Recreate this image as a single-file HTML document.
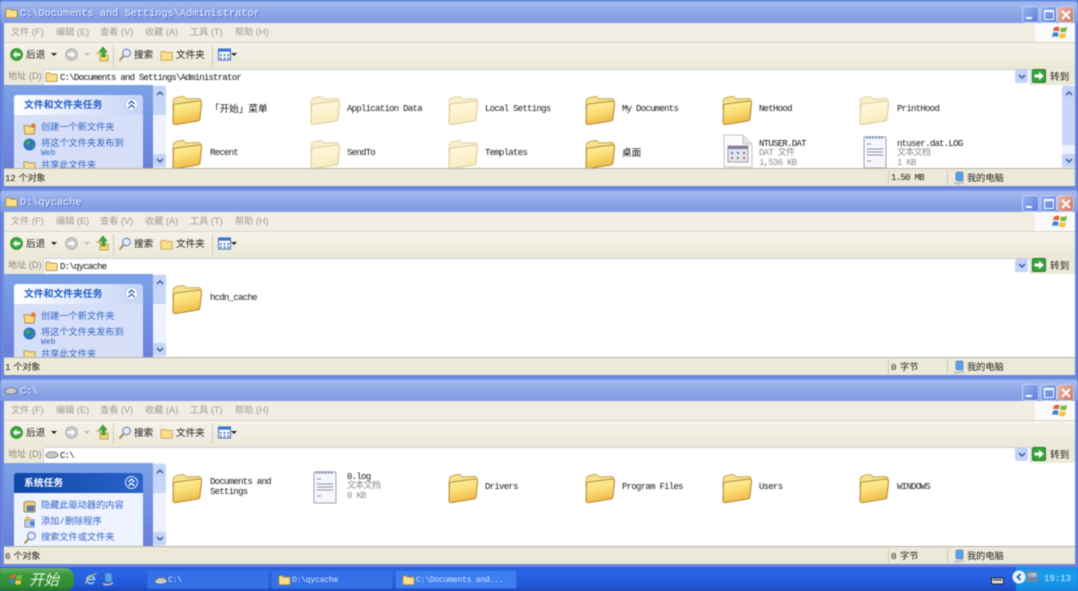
<!DOCTYPE html>
<html lang="zh"><head><meta charset="utf-8"><title>Windows XP</title>
<style>
html,body{margin:0;padding:0;width:1078px;height:591px;overflow:hidden;background:#2a5fd8}
body{font-family:"Liberation Mono","WenQuanYi Zen Hei","Noto Sans CJK SC",monospace;filter:blur(.5px)}
div,span,svg{position:absolute;white-space:nowrap}
.w{left:0;width:1078px;height:189px;background:#6b86dc;overflow:hidden}
.tb{left:0;top:0;width:1078px;height:23px;border-radius:6px 6px 0 0;background:linear-gradient(#5f85dc,#a4b9ee 12%,#93abe9 45%,#86a1e6 75%,#7f9be3)}
.tt{left:20px;top:7px;font-size:10.25px;line-height:14px;color:#f4f7fd;text-shadow:1px 1px 0 #4a66c0}
.btn{top:6px;width:15px;height:15px;border:1px solid #c4d2f4;border-radius:3px;background:linear-gradient(135deg,#9ab3ee,#5a7edc)}
.btn.x{background:linear-gradient(135deg,#e8b8ae,#cc7460)}
.bar{left:4px;width:1071px;background:#ece9d8}
.m{top:23px;height:19px;border-bottom:1px solid #d8d4c2;background:#f0eee2}
.mi{top:26px;font-family:"Liberation Sans","WenQuanYi Zen Hei","Noto Sans CJK SC",sans-serif;font-size:9.2px;line-height:13px;color:#a09e92}
.logo{left:1035px;top:23px;width:40px;height:19px;background:#fafafa}
.tool{top:43px;height:25px;background:linear-gradient(#f5f3ea,#ebe8d8)}
.tx{font-size:9.6px;line-height:13px;color:#1c1c1c;margin-top:1px}
.ar{width:0;height:0;border-left:3px solid transparent;border-right:3px solid transparent;border-top:3px solid #222;top:53px}
.sep{width:1px;background:#cfcbb8;top:45px;height:21px}
.ad{top:68px;height:17px;background:#ece9d8}
.al{left:8px;top:70px;font-family:"Liberation Sans","WenQuanYi Zen Hei","Noto Sans CJK SC",sans-serif;font-size:9.2px;line-height:13px;color:#8d8b80}
.ab{left:43px;top:69px;width:986px;height:15px;background:#fff;border:1px solid #c8cfdc}
.at{left:60px;top:72px;font-size:9px;line-height:13px;letter-spacing:-.76px;color:#111}
.side{left:4px;top:85px;width:149px;height:83px;background:linear-gradient(#7ba2e7,#6a80da);overflow:hidden}
.hd{left:10px;top:10px;width:129px;height:20px;border-radius:3px 3px 0 0;background:linear-gradient(90deg,#fff,#c6d3f7)}
.hd b{position:absolute;left:10px;top:4px;font-size:9.8px;line-height:13px;color:#215dc6;font-weight:bold}
.hd i{position:absolute;right:5px;top:3px;width:13px;height:13px;border-radius:50%;background:#fff;border:1px solid #b8c6ea;box-sizing:border-box}
.hd svg{right:7px;top:5px}
.bd{left:10px;top:30px;width:129px;height:60px;background:#d6dff7}
.lk{left:37px;font-size:9.2px;line-height:12px;color:#2f63c8;margin-top:1px}
.cont{left:153px;top:85px;width:922px;height:83px;background:#fff;overflow:hidden}
.sb{top:85px;width:13px;height:83px;background:#edf2fe}
.sbb{left:0;width:13px;height:13px;background:#c4d3f8;border-radius:2px}
.sbb svg{left:3px;top:4px}
.th{left:0;top:14px;width:13px;background:#c8d6fa}
.n{font-size:9px;line-height:11px;letter-spacing:-.72px;color:#1a1a1a;margin-top:1px}
.g{color:#8b8b8b}
.st{top:168px;height:18px;background:#ece9d8;border-top:1px solid #b5b2a4;box-sizing:border-box}
.stx{font-size:9.2px;line-height:13px;top:172px;color:#222}
.sd{width:1px;top:170px;height:15px;background:#cfcbb8}
.task{left:0;top:567px;width:1078px;height:24px;background:linear-gradient(#2a5ed8,#2a66e8 15%,#2358d8 75%,#1c46b8)}
.start{left:0;top:1px;width:74px;height:23px;border-radius:0 9px 9px 0;background:linear-gradient(#68b068,#389838 30%,#2f8c2f 80%,#246f24)}
.start span{left:29px;top:3px;font:italic 15px/17px "WenQuanYi Zen Hei","Noto Sans CJK SC",sans-serif;color:#e8f2e8}
.tk{top:3px;width:122px;height:19px;border-radius:2px;background:#3470e6;box-sizing:border-box;border:1px solid #2f68dc}
.tk span{left:20px;top:4px;font-size:8px;line-height:11px;letter-spacing:-.2px;color:#d8e4fa}
.tray{left:1016px;top:0;width:62px;height:24px;background:linear-gradient(#1c8ce8,#18a0ee 30%,#1488e0)}
</style></head><body>
<svg width="0" height="0" style="left:0;top:0"><defs>
<linearGradient id="fg" x1="0" y1="0" x2=".3" y2="1"><stop offset="0" stop-color="#fdf3a8"/><stop offset=".5" stop-color="#fbe07a"/><stop offset="1" stop-color="#efbc48"/></linearGradient>
<linearGradient id="pg" x1="0" y1="0" x2=".3" y2="1"><stop offset="0" stop-color="#fffbe4"/><stop offset="1" stop-color="#f9ebbc"/></linearGradient>
<symbol id="fo" viewBox="0 0 30 30"><path d="M1 8Q1 3 5 2.500L10 1.500Q13 1.500 14 4L26 3.500Q29 3.500 29 6V10L1 14Z" fill="#f6e28e" stroke="#c8a84e" stroke-width=".9"/><path d="M1.500 11Q2 9 4 9L27 6Q30 6 29.500 9L28 23Q28 25.500 25.500 26L4 29.500Q1 30 1 27Z" fill="url(#fg)" stroke="#b6893a" stroke-width="1.100"/></symbol>
<symbol id="fp" viewBox="0 0 30 30"><path d="M1 8Q1 3 5 2.500L10 1.500Q13 1.500 14 4L26 3.500Q29 3.500 29 6V10L1 14Z" fill="#f9efca" stroke="#e0d2a4" stroke-width=".9"/><path d="M1.500 11Q2 9 4 9L27 6Q30 6 29.500 9L28 23Q28 25.500 25.500 26L4 29.500Q1 30 1 27Z" fill="url(#pg)" stroke="#dccb9a" stroke-width="1.100"/></symbol>
<symbol id="sf" viewBox="0 0 16 14"><path d="M1 3H6L7 4H14V13H1Z" fill="#fbe08a" stroke="#c9a24c"/></symbol>
<symbol id="dr" viewBox="0 0 16 14"><path d="M1 7L5 4H12L15 7V9L10 11H4L1 9Z" fill="#c8c8c8" stroke="#555" stroke-width=".7"/></symbol>
<symbol id="back" viewBox="0 0 14 14"><circle cx="7" cy="7" r="6.300" fill="#3da83d" stroke="#2a8a2a"/><path d="M3 7L7 3.400V5.600H11V8.400H7V10.600Z" fill="#fff"/></symbol>
<symbol id="fwd" viewBox="0 0 14 14"><circle cx="7" cy="7" r="6.300" fill="#c8c8c8" stroke="#b0b0b0"/><path d="M11 7L7 3.400V5.600H3V8.400H7V10.600Z" fill="#fff"/></symbol>
<symbol id="up" viewBox="0 0 14 16"><path d="M1 7H5V15H13V9H5" fill="#f6d873" stroke="#c8a448"/><path d="M8 1L12 6H10V11H7V6H4Z" fill="#3da83d" stroke="#2a8a2a" stroke-width=".6"/></symbol>
<symbol id="se" viewBox="0 0 14 14"><circle cx="8.500" cy="5" r="3.800" fill="#e4eefc" stroke="#7a94c0" stroke-width="1.300"/><path d="M5.600 7.800L1.500 12.500" stroke="#b08a4c" stroke-width="2"/></symbol>
<symbol id="vw" viewBox="0 0 14 13"><rect x=".5" y=".5" width="13" height="12" fill="#fff" stroke="#3a64b8"/><rect x=".5" y=".5" width="13" height="3" fill="#3a78d8"/><path d="M2 6h2v2H2zM6 6h2v2H6zM10 6h2v2h-2zM2 9.500h2v2H2zM6 9.500h2v2H6zM10 9.500h2v2h-2z" fill="#4a78c8"/></symbol>
<symbol id="go" viewBox="0 0 14 14"><rect x=".5" y=".5" width="13" height="13" rx="1.500" fill="#35a53a" stroke="#1f7a26"/><path d="M2.500 5.500H7V2.800L11.800 7 7 11.200V8.500H2.500Z" fill="#fff"/></symbol>
<symbol id="txt" viewBox="0 0 24 34"><rect x="1" y="2" width="22" height="31" rx="1" fill="#f6f6fb" stroke="#9aa1b4"/><path d="M3 2.500h18" stroke="#7b89a8" stroke-width="2.500" stroke-dasharray="1.500 1.500"/><path d="M4 9h4M4 14h16M4 17h16M4 20h16M4 26h4" stroke="#8a93a5"/></symbol>
<symbol id="dat" viewBox="0 0 30 34"><path d="M1 1H20L29 10V33H1Z" fill="#fafafa" stroke="#c4c4c4"/><path d="M20 1V10H29" fill="#e8e8e8" stroke="#c4c4c4"/><rect x="5" y="12" width="20" height="16" fill="#e4e4ea" stroke="#a0a0b0"/><rect x="5" y="12" width="20" height="3" fill="#7e7ea0"/><path d="M8 18h2v2H8zM14 18h2v2h-2zM20 18h2v2h-2z" fill="#5b72b0"/><path d="M8 23h2v2H8zM20 23h2v2h-2z" fill="#c86060"/><path d="M14 23h2v2h-2z" fill="#5a9c5a"/></symbol>
<symbol id="pc" viewBox="0 0 12 14"><rect x="3" y="1" width="7" height="9" rx="1.500" fill="#5aa0e8" stroke="#3a70b0" stroke-width=".6"/><path d="M1 11Q6 13 11 10V12Q6 14.500 1 13Z" fill="#b9bcc8"/></symbol>
<symbol id="xp" viewBox="0 0 18 18"><path d="M2 4Q5 2 8 3.500L7 8Q4 6.500 1 8Z" fill="#e2603a"/><path d="M9.500 3.500Q12.500 5 16 3L15 8Q11.500 9.500 8.500 8Z" fill="#78b83c"/><path d="M1 9.500Q4 8 6.800 9.500L6 14Q3 12.500 0 14Z" fill="#3f7fd6"/><path d="M8.200 9.500Q11.500 11 14.800 9.500L14 14.500Q10.500 16 7.200 14Z" fill="#f4c542"/></symbol>
<symbol id="fold2" viewBox="0 0 14 12"><path d="M1 3Q1 1.500 2.500 1.500H5L6 3H12Q13 3 13 4V10Q13 11 12 11H2Q1 11 1 10Z" fill="#fbe08a" stroke="#a88a3c" stroke-width=".9"/></symbol>
<symbol id="globe" viewBox="0 0 14 14"><circle cx="7" cy="7" r="6.500" fill="#2f74c8"/><path d="M3 3Q7 2 8 5L6 8L3 7ZM9 8L12 7L10 12Z" fill="#3cae48"/></symbol>
<symbol id="sh" viewBox="0 0 14 14"><path d="M1 3H5L6 4H13V12H1Z" fill="#f6dc94" stroke="#a08838" stroke-width=".8"/></symbol>
<symbol id="cr" viewBox="0 0 14 14"><path d="M1 4H6L7 5H13L12 13H2Z" fill="#f9da80" stroke="#9a7a30" stroke-width=".8"/><circle cx="11" cy="4" r="2.500" fill="#e8763a"/></symbol>
<symbol id="hide" viewBox="0 0 14 14"><path d="M1 4Q1 1.500 4 1.500H10Q13 1.500 13 4V12Q13 13 12 13H2Q1 13 1 12Z" fill="#e9cf7a" stroke="#8a7538" stroke-width=".8"/><rect x="4" y="6" width="8" height="6" fill="#5d78b0"/></symbol>
<symbol id="add" viewBox="0 0 14 14"><rect x="2" y="5" width="10" height="8" fill="#c9c9e0" stroke="#666a90" stroke-width=".7"/><circle cx="5" cy="4" r="2.500" fill="#e8c040"/><circle cx="10" cy="9" r="2.500" fill="#3f8ad8"/></symbol>
<symbol id="chev" viewBox="0 0 9 9"><path d="M1.500 4L4.500 1L7.500 4M1.500 8L4.500 5L7.500 8" fill="none" stroke="#2a5ab8" stroke-width="1.300"/></symbol>
<symbol id="chevw" viewBox="0 0 9 9"><path d="M1.500 4L4.500 1L7.500 4M1.500 8L4.500 5L7.500 8" fill="none" stroke="#fff" stroke-width="1.300"/></symbol>
<symbol id="aup" viewBox="0 0 8 6"><path d="M1 5L4 2L7 5" fill="none" stroke="#3a5a9a" stroke-width="1.500"/></symbol>
<symbol id="adn" viewBox="0 0 8 6"><path d="M1 1L4 4L7 1" fill="none" stroke="#3a5a9a" stroke-width="1.500"/></symbol>
</defs></svg>

<!-- WINDOW 1 -->
<div class="w" style="top:0">
<div class="tb"></div>
<svg style="left:5px;top:7px" width="13" height="12"><use href="#fold2"/></svg>
<div class="tt">C:\Documents and Settings\Administrator</div>
<div class="btn" style="left:1022px"><div style="left:3px;top:10px;width:6px;height:2px;background:#fff"></div></div>
<div class="btn" style="left:1040px"><div style="left:3px;top:3px;width:8px;height:7px;border:1px solid #fff;border-top-width:2px"></div></div>
<div class="btn x" style="left:1057px"><svg style="left:3px;top:3px" width="10" height="10"><path d="M1 1L9 9M9 1L1 9" stroke="#fff" stroke-width="2"/></svg></div>
<div class="bar m"></div>
<span class="mi" style="left:11px">文件 (F)</span><span class="mi" style="left:56px">编辑 (E)</span><span class="mi" style="left:100px">查看 (V)</span><span class="mi" style="left:145px">收藏 (A)</span><span class="mi" style="left:190px">工具 (T)</span><span class="mi" style="left:235px">帮助 (H)</span>
<div class="logo"></div><svg style="left:1052px;top:24px" width="17" height="17"><use href="#xp"/></svg>
<div class="bar tool"></div>
<svg style="left:10px;top:48px" width="13" height="13"><use href="#back"/></svg><span class="tx" style="left:26px;top:48px">后退</span><div class="ar" style="left:51px"></div>
<svg style="left:65px;top:48px" width="13" height="13"><use href="#fwd"/></svg><div class="ar" style="left:84px;border-top-color:#bbb"></div>
<svg style="left:95px;top:46px" width="14" height="16"><use href="#up"/></svg>
<div class="sep" style="left:113px"></div>
<svg style="left:118px;top:48px" width="14" height="14"><use href="#se"/></svg><span class="tx" style="left:134px;top:48px">搜索</span>
<svg style="left:160px;top:49px" width="14" height="12"><use href="#sf"/></svg><span class="tx" style="left:176px;top:48px">文件夹</span>
<div class="sep" style="left:212px"></div>
<svg style="left:218px;top:48px" width="13" height="13"><use href="#vw"/></svg><div class="ar" style="left:231px"></div>
<div class="bar ad"></div><span class="al">地址 (D)</span><div class="ab"></div>
<svg style="left:45px;top:71px" width="13" height="12"><use href="#fold2"/></svg>
<span class="at">C:\Documents and Settings\Administrator</span>
<div style="left:1015px;top:70px;width:13px;height:13px;background:#c4d3f8;border-radius:2px"><svg style="left:3px;top:4px" width="8" height="6"><use href="#adn"/></svg></div>
<svg style="left:1032px;top:69px" width="14" height="14"><use href="#go"/></svg><span class="tx" style="left:1050px;top:70px">转到</span>
<div class="side"><div class="hd"><b>文件和文件夹任务</b><i></i><svg width="9" height="9"><use href="#chev"/></svg></div><div class="bd"></div>
<svg style="left:19px;top:37px" width="13" height="13"><use href="#cr"/></svg><span class="lk" style="top:36px">创建一个新文件夹</span>
<svg style="left:19px;top:53px" width="13" height="13"><use href="#globe"/></svg><span class="lk" style="top:52px">将这个文件夹发布到</span><span class="lk" style="top:62px;font-size:8px">Web</span>
<svg style="left:19px;top:74px" width="13" height="13"><use href="#sh"/></svg><span class="lk" style="top:74px">共享此文件夹</span></div>
<div class="cont"></div>
<div class="sb" style="left:153px"><div class="sbb" style="top:1px"><svg width="8" height="6"><use href="#aup"/></svg></div><div class="th" style="height:16px"></div><div class="sbb" style="top:69px"><svg width="8" height="6"><use href="#adn"/></svg></div></div>
<div class="sb" style="left:1062px"><div class="sbb" style="top:1px"><svg width="8" height="6"><use href="#aup"/></svg></div><div class="th" style="height:46px"></div><div class="sbb" style="top:69px"><svg width="8" height="6"><use href="#adn"/></svg></div></div>
<svg style="left:172px;top:95px" width="30" height="30"><use href="#fo"/></svg><span class="tx" style="left:210px;top:102px;color:#111">「开始」菜单</span>
<svg style="left:310px;top:95px" width="30" height="30"><use href="#fp"/></svg><span class="n" style="left:347px;top:103px">Application Data</span>
<svg style="left:448px;top:95px" width="30" height="30"><use href="#fp"/></svg><span class="n" style="left:485px;top:103px">Local Settings</span>
<svg style="left:585px;top:95px" width="30" height="30"><use href="#fo"/></svg><span class="n" style="left:622px;top:103px">My Documents</span>
<svg style="left:722px;top:95px" width="30" height="30"><use href="#fo"/></svg><span class="n" style="left:759px;top:103px">NetHood</span>
<svg style="left:859px;top:95px" width="30" height="30"><use href="#fp"/></svg><span class="n" style="left:897px;top:103px">PrintHood</span>
<div style="left:166px;top:130px;width:896px;height:38px;overflow:hidden">
<svg style="left:6px;top:9px" width="30" height="30"><use href="#fo"/></svg><span class="n" style="left:44px;top:17px">Recent</span>
<svg style="left:144px;top:9px" width="30" height="30"><use href="#fp"/></svg><span class="n" style="left:181px;top:17px">SendTo</span>
<svg style="left:282px;top:9px" width="30" height="30"><use href="#fp"/></svg><span class="n" style="left:319px;top:17px">Templates</span>
<svg style="left:419px;top:9px" width="30" height="30"><use href="#fo"/></svg><span class="tx" style="left:456px;top:16px;color:#111">桌面</span>
<svg style="left:557px;top:4px" width="30" height="34"><use href="#dat"/></svg><span class="n" style="left:593px;top:8px">NTUSER.DAT</span><span class="n g" style="left:593px;top:17px">DAT 文件</span><span class="n g" style="left:593px;top:27px">1,536 KB</span>
<svg style="left:697px;top:5px" width="24" height="34"><use href="#txt"/></svg><span class="n" style="left:731px;top:8px">ntuser.dat.LOG</span><span class="n g" style="left:731px;top:17px">文本文档</span><span class="n g" style="left:731px;top:27px">1 KB</span>
</div>
<div class="bar st"></div><span class="stx" style="left:5px;word-spacing:-2px;letter-spacing:-.3px">12 个对象</span><div class="sd" style="left:888px"></div><div class="sd" style="left:947px"></div>
<span class="stx" style="left:891px;font-size:9px;letter-spacing:-.7px">1.50 MB</span><svg style="left:953px;top:171px" width="12" height="14"><use href="#pc"/></svg><span class="stx" style="left:967px">我的电脑</span>
</div>

<!-- WINDOW 2 -->
<div class="w" style="top:189px">
<div class="tb"></div>
<svg style="left:5px;top:7px" width="13" height="12"><use href="#fold2"/></svg>
<div class="tt">D:\qycache</div>
<div class="btn" style="left:1022px"><div style="left:3px;top:10px;width:6px;height:2px;background:#fff"></div></div>
<div class="btn" style="left:1040px"><div style="left:3px;top:3px;width:8px;height:7px;border:1px solid #fff;border-top-width:2px"></div></div>
<div class="btn x" style="left:1057px"><svg style="left:3px;top:3px" width="10" height="10"><path d="M1 1L9 9M9 1L1 9" stroke="#fff" stroke-width="2"/></svg></div>
<div class="bar m"></div>
<span class="mi" style="left:11px">文件 (F)</span><span class="mi" style="left:56px">编辑 (E)</span><span class="mi" style="left:100px">查看 (V)</span><span class="mi" style="left:145px">收藏 (A)</span><span class="mi" style="left:190px">工具 (T)</span><span class="mi" style="left:235px">帮助 (H)</span>
<div class="logo"></div><svg style="left:1052px;top:24px" width="17" height="17"><use href="#xp"/></svg>
<div class="bar tool"></div>
<svg style="left:10px;top:48px" width="13" height="13"><use href="#back"/></svg><span class="tx" style="left:26px;top:48px">后退</span><div class="ar" style="left:51px"></div>
<svg style="left:65px;top:48px" width="13" height="13"><use href="#fwd"/></svg><div class="ar" style="left:84px;border-top-color:#bbb"></div>
<svg style="left:95px;top:46px" width="14" height="16"><use href="#up"/></svg>
<div class="sep" style="left:113px"></div>
<svg style="left:118px;top:48px" width="14" height="14"><use href="#se"/></svg><span class="tx" style="left:134px;top:48px">搜索</span>
<svg style="left:160px;top:49px" width="14" height="12"><use href="#sf"/></svg><span class="tx" style="left:176px;top:48px">文件夹</span>
<div class="sep" style="left:212px"></div>
<svg style="left:218px;top:48px" width="13" height="13"><use href="#vw"/></svg><div class="ar" style="left:231px"></div>
<div class="bar ad"></div><span class="al">地址 (D)</span><div class="ab"></div>
<svg style="left:45px;top:71px" width="13" height="12"><use href="#fold2"/></svg>
<span class="at">D:\qycache</span>
<div style="left:1015px;top:70px;width:13px;height:13px;background:#c4d3f8;border-radius:2px"><svg style="left:3px;top:4px" width="8" height="6"><use href="#adn"/></svg></div>
<svg style="left:1032px;top:69px" width="14" height="14"><use href="#go"/></svg><span class="tx" style="left:1050px;top:70px">转到</span>
<div class="side"><div class="hd"><b>文件和文件夹任务</b><i></i><svg width="9" height="9"><use href="#chev"/></svg></div><div class="bd"></div>
<svg style="left:19px;top:37px" width="13" height="13"><use href="#cr"/></svg><span class="lk" style="top:36px">创建一个新文件夹</span>
<svg style="left:19px;top:53px" width="13" height="13"><use href="#globe"/></svg><span class="lk" style="top:52px">将这个文件夹发布到</span><span class="lk" style="top:62px;font-size:8px">Web</span>
<svg style="left:19px;top:74px" width="13" height="13"><use href="#sh"/></svg><span class="lk" style="top:74px">共享此文件夹</span></div>
<div class="cont"></div>
<div class="sb" style="left:153px"><div class="sbb" style="top:1px"><svg width="8" height="6"><use href="#aup"/></svg></div><div class="th" style="height:16px"></div><div class="sbb" style="top:69px"><svg width="8" height="6"><use href="#adn"/></svg></div></div>
<svg style="left:172px;top:95px" width="30" height="30"><use href="#fo"/></svg><span class="n" style="left:210px;top:103px">hcdn_cache</span>
<div class="bar st"></div><span class="stx" style="left:5px;word-spacing:-2px;letter-spacing:-.3px">1 个对象</span><div class="sd" style="left:888px"></div><div class="sd" style="left:947px"></div>
<span class="stx" style="left:891px;word-spacing:-2px">0 字节</span><svg style="left:953px;top:171px" width="12" height="14"><use href="#pc"/></svg><span class="stx" style="left:967px">我的电脑</span>
</div>

<!-- WINDOW 3 -->
<div class="w" style="top:378px">
<div class="tb"></div>
<svg style="left:4px;top:6px" width="14" height="13"><use href="#dr"/></svg>
<div class="tt">C:\</div>
<div class="btn" style="left:1022px"><div style="left:3px;top:10px;width:6px;height:2px;background:#fff"></div></div>
<div class="btn" style="left:1040px"><div style="left:3px;top:3px;width:8px;height:7px;border:1px solid #fff;border-top-width:2px"></div></div>
<div class="btn x" style="left:1057px"><svg style="left:3px;top:3px" width="10" height="10"><path d="M1 1L9 9M9 1L1 9" stroke="#fff" stroke-width="2"/></svg></div>
<div class="bar m"></div>
<span class="mi" style="left:11px">文件 (F)</span><span class="mi" style="left:56px">编辑 (E)</span><span class="mi" style="left:100px">查看 (V)</span><span class="mi" style="left:145px">收藏 (A)</span><span class="mi" style="left:190px">工具 (T)</span><span class="mi" style="left:235px">帮助 (H)</span>
<div class="logo"></div><svg style="left:1052px;top:24px" width="17" height="17"><use href="#xp"/></svg>
<div class="bar tool"></div>
<svg style="left:10px;top:48px" width="13" height="13"><use href="#back"/></svg><span class="tx" style="left:26px;top:48px">后退</span><div class="ar" style="left:51px"></div>
<svg style="left:65px;top:48px" width="13" height="13"><use href="#fwd"/></svg><div class="ar" style="left:84px;border-top-color:#bbb"></div>
<svg style="left:95px;top:46px" width="14" height="16"><use href="#up"/></svg>
<div class="sep" style="left:113px"></div>
<svg style="left:118px;top:48px" width="14" height="14"><use href="#se"/></svg><span class="tx" style="left:134px;top:48px">搜索</span>
<svg style="left:160px;top:49px" width="14" height="12"><use href="#sf"/></svg><span class="tx" style="left:176px;top:48px">文件夹</span>
<div class="sep" style="left:212px"></div>
<svg style="left:218px;top:48px" width="13" height="13"><use href="#vw"/></svg><div class="ar" style="left:231px"></div>
<div class="bar ad"></div><span class="al">地址 (D)</span><div class="ab"></div>
<svg style="left:45px;top:70px" width="14" height="13"><use href="#dr"/></svg>
<span class="at">C:\</span>
<div style="left:1015px;top:70px;width:13px;height:13px;background:#c4d3f8;border-radius:2px"><svg style="left:3px;top:4px" width="8" height="6"><use href="#adn"/></svg></div>
<svg style="left:1032px;top:69px" width="14" height="14"><use href="#go"/></svg><span class="tx" style="left:1050px;top:70px">转到</span>
<div class="side"><div class="hd" style="background:linear-gradient(90deg,#0f47a8,#2a62c8)"><b style="color:#fff">系统任务</b><i style="background:#2a62c8;border-color:#e0e8fa"></i><svg width="9" height="9"><use href="#chevw"/></svg></div><div class="bd" style="background:#eff3ff"></div>
<svg style="left:19px;top:37px" width="13" height="13"><use href="#hide"/></svg><span class="lk" style="top:36px">隐藏此驱动器的内容</span>
<svg style="left:19px;top:52px" width="13" height="13"><use href="#add"/></svg><span class="lk" style="top:52px">添加/删除程序</span>
<svg style="left:19px;top:68px" width="14" height="14"><use href="#se"/></svg><span class="lk" style="top:68px">搜索文件或文件夹</span></div>
<div class="cont"></div>
<div class="sb" style="left:153px"><div class="sbb" style="top:1px"><svg width="8" height="6"><use href="#aup"/></svg></div><div class="th" style="height:16px"></div><div class="sbb" style="top:69px"><svg width="8" height="6"><use href="#adn"/></svg></div></div>
<svg style="left:172px;top:95px" width="30" height="30"><use href="#fo"/></svg><span class="n" style="left:210px;top:98px">Documents and</span><span class="n" style="left:210px;top:108px">Settings</span>
<svg style="left:313px;top:92px" width="24" height="34"><use href="#txt"/></svg><span class="n" style="left:347px;top:93px">0.log</span><span class="n g" style="left:347px;top:102px">文本文档</span><span class="n g" style="left:347px;top:112px">0 KB</span>
<svg style="left:448px;top:95px" width="30" height="30"><use href="#fo"/></svg><span class="n" style="left:485px;top:103px">Drivers</span>
<svg style="left:585px;top:95px" width="30" height="30"><use href="#fo"/></svg><span class="n" style="left:622px;top:103px">Program Files</span>
<svg style="left:722px;top:95px" width="30" height="30"><use href="#fo"/></svg><span class="n" style="left:759px;top:103px">Users</span>
<svg style="left:859px;top:95px" width="30" height="30"><use href="#fo"/></svg><span class="n" style="left:897px;top:103px">WINDOWS</span>
<div class="bar st"></div><span class="stx" style="left:5px;word-spacing:-2px;letter-spacing:-.3px">6 个对象</span><div class="sd" style="left:888px"></div><div class="sd" style="left:947px"></div>
<span class="stx" style="left:891px;word-spacing:-2px">0 字节</span><svg style="left:953px;top:171px" width="12" height="14"><use href="#pc"/></svg><span class="stx" style="left:967px">我的电脑</span>
</div>

<!-- TASKBAR -->
<div class="task">
<div class="start"><svg style="left:9px;top:4px" width="15" height="15"><use href="#xp"/></svg><span>开始</span></div>
<svg style="left:84px;top:5px" width="14" height="14" viewBox="0 0 14 14"><path d="M3.500 7.500H10.500A3.800 3.800 0 1 0 9.800 10" fill="none" stroke="#8ec8f4" stroke-width="1.800"/><path d="M1.500 12.500Q1 9 6 5T12.800 1.500" fill="none" stroke="#e8b830" stroke-width="1"/></svg>
<svg style="left:102px;top:5px" width="12" height="14"><use href="#pc"/></svg>
<div class="tk" style="left:147px"><svg style="left:6px;top:3px" width="14" height="13"><use href="#dr"/></svg><span>C:\</span></div>
<div class="tk" style="left:271px"><svg style="left:6px;top:3px" width="13" height="12"><use href="#fold2"/></svg><span>D:\qycache</span></div>
<div class="tk" style="left:395px;background:#3d7ff0"><svg style="left:6px;top:3px" width="13" height="12"><use href="#fold2"/></svg><span>C:\Documents and...</span></div>
<svg style="left:991px;top:9px" width="13" height="9"><rect x=".5" y="2" width="12" height="6" fill="#ddd" stroke="#222"/><path d="M2 4h9" stroke="#222"/></svg>
<div class="tray"><svg style="left:-4px;top:3px" width="14" height="14"><circle cx="7" cy="7" r="6.500" fill="#e8f2fc"/><path d="M8.500 4L5.500 7L8.500 10" stroke="#1a60c8" stroke-width="1.800" fill="none"/></svg>
<div style="left:10px;top:4px;width:12px;height:11px;background:#7088a8;color:#fff;font-size:7px;line-height:11px;text-align:center">vm</div>
<span style="left:28px;top:6px;font-size:9px;line-height:12px;color:#d8ecfa">19:13</span></div>
</div>
</body></html>
